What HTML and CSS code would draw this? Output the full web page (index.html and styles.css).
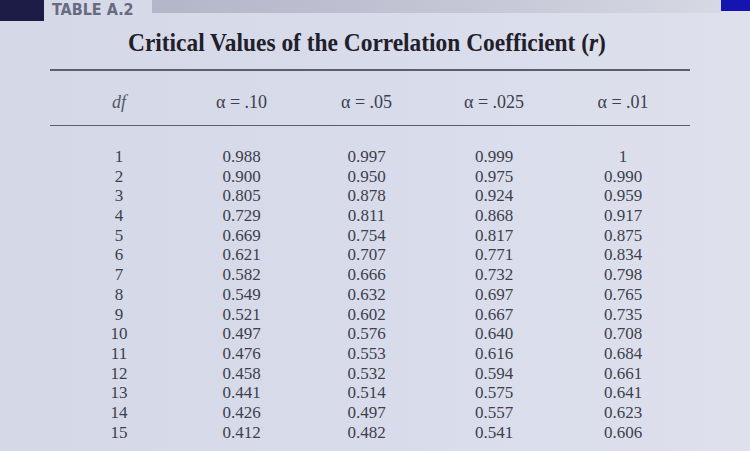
FILE: index.html
```html
<!DOCTYPE html>
<html>
<head>
<meta charset="utf-8">
<link rel="stylesheet" href="styles.css">
</head>
<body>
<div class="page">
  <div class="topbar">
    <div class="navy"></div>
    <div class="label">TABLE A.2</div>
    <div class="graybar"></div>
    <div class="blue"></div>
  </div>
  <h1 class="title"><span>Critical Values of the Correlation Coefficient (<i>r</i>)</span></h1>
  <div class="rule rule-top"></div>
  <div class="grid head">
    <div class="c df"><i>df</i></div>
    <div class="c">α = .10</div>
    <div class="c">α = .05</div>
    <div class="c">α = .025</div>
    <div class="c">α = .01</div>
  </div>
  <div class="rule rule-mid"></div>
  <div class="grid body">
    <div class="c">1</div><div class="c">0.988</div><div class="c">0.997</div><div class="c">0.999</div><div class="c">1</div>
    <div class="c">2</div><div class="c">0.900</div><div class="c">0.950</div><div class="c">0.975</div><div class="c">0.990</div>
    <div class="c">3</div><div class="c">0.805</div><div class="c">0.878</div><div class="c">0.924</div><div class="c">0.959</div>
    <div class="c">4</div><div class="c">0.729</div><div class="c">0.811</div><div class="c">0.868</div><div class="c">0.917</div>
    <div class="c">5</div><div class="c">0.669</div><div class="c">0.754</div><div class="c">0.817</div><div class="c">0.875</div>
    <div class="c">6</div><div class="c">0.621</div><div class="c">0.707</div><div class="c">0.771</div><div class="c">0.834</div>
    <div class="c">7</div><div class="c">0.582</div><div class="c">0.666</div><div class="c">0.732</div><div class="c">0.798</div>
    <div class="c">8</div><div class="c">0.549</div><div class="c">0.632</div><div class="c">0.697</div><div class="c">0.765</div>
    <div class="c">9</div><div class="c">0.521</div><div class="c">0.602</div><div class="c">0.667</div><div class="c">0.735</div>
    <div class="c">10</div><div class="c">0.497</div><div class="c">0.576</div><div class="c">0.640</div><div class="c">0.708</div>
    <div class="c">11</div><div class="c">0.476</div><div class="c">0.553</div><div class="c">0.616</div><div class="c">0.684</div>
    <div class="c">12</div><div class="c">0.458</div><div class="c">0.532</div><div class="c">0.594</div><div class="c">0.661</div>
    <div class="c">13</div><div class="c">0.441</div><div class="c">0.514</div><div class="c">0.575</div><div class="c">0.641</div>
    <div class="c">14</div><div class="c">0.426</div><div class="c">0.497</div><div class="c">0.557</div><div class="c">0.623</div>
    <div class="c">15</div><div class="c">0.412</div><div class="c">0.482</div><div class="c">0.541</div><div class="c">0.606</div>
  </div>
</div>
</body>
</html>
```
FILE: styles.css
```css
html, body {
  margin: 0;
  padding: 0;
}
body {
  width: 750px;
  height: 451px;
  overflow: hidden;
  background: linear-gradient(90deg, #d4d8e7 0%, #d8dbea 50%, #dee1ec 100%);
  font-family: "Liberation Serif", "Times New Roman", serif;
  color: #3c3e4a;
}
.page {
  width: 750px;
  height: 451px;
}
.topbar {
  display: flex;
  align-items: flex-start;
  height: 21px;
}
.navy {
  width: 44px;
  height: 21px;
  background: #1d1c47;
  flex: none;
}
.label {
  margin-left: 8px;
  padding-top: 1px;
  font-family: "Liberation Sans Narrow", "DejaVu Sans Condensed", "Liberation Sans", sans-serif;
  font-weight: bold;
  font-size: 16px;
  line-height: 17px;
  color: #686a80;
  width: 100px;
  flex: none;
}
.graybar {
  flex: 1;
  height: 13px;
  background: linear-gradient(90deg, #b3b5c9 0%, #c6c8d7 60%, #d6d8e3 100%);
}
.blue {
  width: 29px;
  height: 11px;
  background: #1414b0;
  flex: none;
}
.title {
  margin: 7px 0 0 128px;
  height: 30px;
  font-size: 26px;
  line-height: 30px;
  font-weight: bold;
  color: #1f2029;
  white-space: nowrap;
}
.title span {
  display: inline-block;
  transform: scaleX(0.9);
  transform-origin: left center;
}
.title i {
  font-weight: bold;
}
.rule {
  margin-left: 50px;
  width: 640px;
  height: 1.5px;
  background: #5b5e6b;
}
.rule-top {
  margin-top: 11px;
}
.grid {
  display: grid;
  margin-left: 50px;
  width: 640px;
  padding-left: 8px;
  box-sizing: border-box;
  grid-template-columns: 122px 123px 127px 128px 130px;
}
.c {
  text-align: center;
}
.head {
  height: 54px;
  padding-top: 9px;
  align-items: center;
  font-size: 18px;
  color: #3e404c;
}
.df {
  color: #555766;
}
.body {
  margin-top: 21px;
  grid-auto-rows: 19.7px;
  font-size: 17px;
  line-height: 19.7px;
  color: #3d3f4b;
}
```
